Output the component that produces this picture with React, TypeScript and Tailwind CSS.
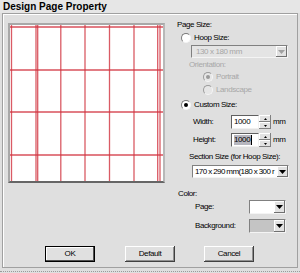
import React from 'react';

const Tri = ({ color = '#000' }: { color?: string }) => (
  <svg width="7" height="4" viewBox="0 0 7 4">
    <path d="M0 0h7L3.5 4z" fill={color} />
  </svg>
);

const Radio = ({ checked = false, disabled = false }: { checked?: boolean; disabled?: boolean }) => (
  <span
    className={
      disabled
        ? 'w-[10px] h-[10px] shrink-0 rounded-full border border-t-[#9a9a9a] border-l-[#9a9a9a] border-r-[#f4f4f4] border-b-[#f4f4f4] bg-[#e6e6e6] flex items-center justify-center'
        : 'w-[10px] h-[10px] shrink-0 rounded-full border border-t-[#7a7a7a] border-l-[#7a7a7a] border-r-[#f4f4f4] border-b-[#f4f4f4] bg-white flex items-center justify-center'
    }
  >
    {checked && <span className={disabled ? 'w-[4px] h-[4px] rounded-full bg-[#9a9a9a]' : 'w-[4px] h-[4px] rounded-full bg-black'} />}
  </span>
);

const ArrowBtn = ({ disabled = false }: { disabled?: boolean }) => (
  <div className="w-[11px] h-full shrink-0 bg-[#e2e2e2] shadow-[inset_-1px_-1px_0_#707070,inset_1px_1px_0_#fff] flex items-center justify-center">
    <Tri color={disabled ? '#a0a0a0' : '#000'} />
  </div>
);

const Spinner = () => (
  <div className="w-[12px] h-[14px] flex flex-col">
    <div className="h-[7px] bg-[#e2e2e2] shadow-[inset_-1px_-1px_0_#808080,inset_1px_1px_0_#fff] flex items-center justify-center">
      <svg width="3" height="2" viewBox="0 0 3 2"><path d="M0 2h3L1.5 0z" fill="#000" /></svg>
    </div>
    <div className="h-[7px] bg-[#e2e2e2] shadow-[inset_-1px_-1px_0_#808080,inset_1px_1px_0_#fff] flex items-center justify-center">
      <svg width="3" height="2" viewBox="0 0 3 2"><path d="M0 0h3L1.5 2z" fill="#000" /></svg>
    </div>
  </div>
);

const GridPreview = () => {
  const xs = [1.5, 26, 27.7, 50.8, 75, 99.5, 124, 147.7, 150];
  const ys = [2, 45, 87, 130];
  return (
    <svg width="153" height="156" viewBox="0 0 153 156" className="block">
      {xs.map((x) => (
        <line key={'x' + x} x1={x} y1={0} x2={x} y2={156} stroke="#d2333f" strokeWidth="1.3" opacity="0.8" />
      ))}
      {ys.map((y) => (
        <line key={'y' + y} x1={0} y1={y} x2={153} y2={y} stroke="#d2333f" strokeWidth="1.3" opacity="0.85" />
      ))}
    </svg>
  );
};

const Button = ({ label, def = false, cls = '' }: { label: string; def?: boolean; cls?: string }) => (
  <button
    className={
      (def
        ? 'block w-[50px] h-[16px] border border-black bg-[#e0e0e0] shadow-[inset_-1px_-1px_0_#505050,inset_1px_1px_0_#fff] text-[8px] leading-none text-black '
        : 'block w-[50px] h-[16px] bg-[#e0e0e0] shadow-[inset_-1px_-1px_0_#404040,inset_1px_1px_0_#fff,inset_-2px_-2px_0_#909090] text-[8px] leading-none text-black ') + cls
    }
  >
    {label}
  </button>
);

export default function App() {
  return (
    <div className="w-[300px] h-[273px] bg-[#dfdfdf] overflow-hidden text-black whitespace-nowrap tracking-[-0.4px] [font-family:'Liberation_Sans',Arial,sans-serif]">
      <div className="h-[13px] pl-[3px] flex items-center bg-[#e6e6e6] text-[10px] font-bold leading-none tracking-normal">
        Design Page Property
      </div>

      <div className="ml-[2px] w-[296px] h-[255px] border border-[#a0a0a0] shadow-[inset_1px_1px_0_#fff] flex flex-col">
        <div className="flex h-[169px]">
          <div className="ml-[5px] mt-[9px] w-[157px] h-[160px] shrink-0 border-2 border-t-[#a8a8a8] border-l-[#a8a8a8] border-r-[#b8b8b8] border-b-[#666] bg-white">
            <GridPreview />
          </div>

          <div className="ml-[12px] pt-[6px] flex flex-col text-[8px] leading-[10px]">
            <div className="h-[10px]">Page Size:</div>

            <div className="mt-[3px] h-[10px] flex items-center gap-[3px] ml-[4px]">
              <Radio />
              <span>Hoop Size:</span>
            </div>

            <div className="mt-[2px] ml-[14px] w-[97px] h-[13px] flex border border-t-[#808080] border-l-[#808080] border-r-[#f4f4f4] border-b-[#f4f4f4] bg-[#e4e4e4]">
              <div className="flex-1 pl-[4px] flex items-center text-[#a6a6a6]">130 x 180 mm</div>
              <ArrowBtn disabled />
            </div>

            <div className="mt-[2px] ml-[12px] h-[10px] text-[#a8a8a8]">Orientation:</div>

            <div className="mt-[2px] ml-[26px] h-[10px] flex items-center gap-[3px] text-[#a8a8a8]">
              <Radio checked disabled />
              <span>Portrait</span>
            </div>

            <div className="mt-[3px] ml-[26px] h-[10px] flex items-center gap-[3px] text-[#a8a8a8]">
              <Radio disabled />
              <span>Landscape</span>
            </div>

            <div className="mt-[5px] ml-[4px] h-[10px] flex items-center gap-[3px]">
              <Radio checked />
              <span>Custom Size:</span>
            </div>

            <div className="mt-[5px] ml-[16px] h-[14px] flex items-center">
              <span className="w-[38px]">Width:</span>
              <div className="w-[28px] h-[14px] bg-white border border-t-[#606060] border-l-[#606060] border-r-[#f0f0f0] border-b-[#f0f0f0] pl-[2px] flex items-center">1000</div>
              <Spinner />
              <span className="ml-[2px]">mm</span>
            </div>

            <div className="mt-[4px] ml-[16px] h-[14px] flex items-center">
              <span className="w-[38px]">Height:</span>
              <div className="w-[28px] h-[14px] bg-white border border-t-[#606060] border-l-[#606060] border-r-[#f0f0f0] border-b-[#f0f0f0] pl-[2px] flex items-center">
                <span className="bg-[#b6b6be] pr-[1px] border-r border-black">1000</span>
              </div>
              <Spinner />
              <span className="ml-[2px]">mm</span>
            </div>

            <div className="mt-[5px] ml-[12px] h-[10px]">Section Size (for Hoop Size):</div>

            <div className="mt-[3px] ml-[15px] w-[97px] h-[13px] flex border border-t-[#808080] border-l-[#808080] border-r-[#f4f4f4] border-b-[#f4f4f4] bg-white">
              <div className="flex-1 min-w-0 pl-[2px] flex items-center overflow-hidden tracking-[-0.6px]">170 x 290 mm(180 x 300 r</div>
              <ArrowBtn />
            </div>
          </div>
        </div>

        <div className="ml-[175px] mt-[6px] flex flex-col text-[8px] leading-[10px]">
          <div className="h-[10px]">Color:</div>
          <div className="mt-[1px] ml-[17px] h-[14px] flex items-center">
            <span className="w-[54px]">Page:</span>
            <div className="w-[37px] h-[14px] flex border border-t-[#808080] border-l-[#808080] border-r-[#f4f4f4] border-b-[#f4f4f4] bg-white">
              <div className="flex-1 bg-white" />
              <ArrowBtn />
            </div>
          </div>
          <div className="mt-[5px] ml-[17px] h-[14px] flex items-center">
            <span className="w-[54px]">Background:</span>
            <div className="w-[37px] h-[14px] flex border border-t-[#808080] border-l-[#808080] border-r-[#f4f4f4] border-b-[#f4f4f4] bg-white">
              <div className="flex-1 bg-[#c4c4c4]" />
              <ArrowBtn />
            </div>
          </div>
        </div>

        <div className="mt-[13px] ml-[42px] flex items-start">
          <Button label="OK" def />
          <Button label="Default" cls="ml-[30px]" />
          <Button label="Cancel" cls="ml-[29px]" />
        </div>
      </div>

      <div className="mt-[3px] h-0 border-t border-dotted border-[#9a9a9a]" />
    </div>
  );
}
